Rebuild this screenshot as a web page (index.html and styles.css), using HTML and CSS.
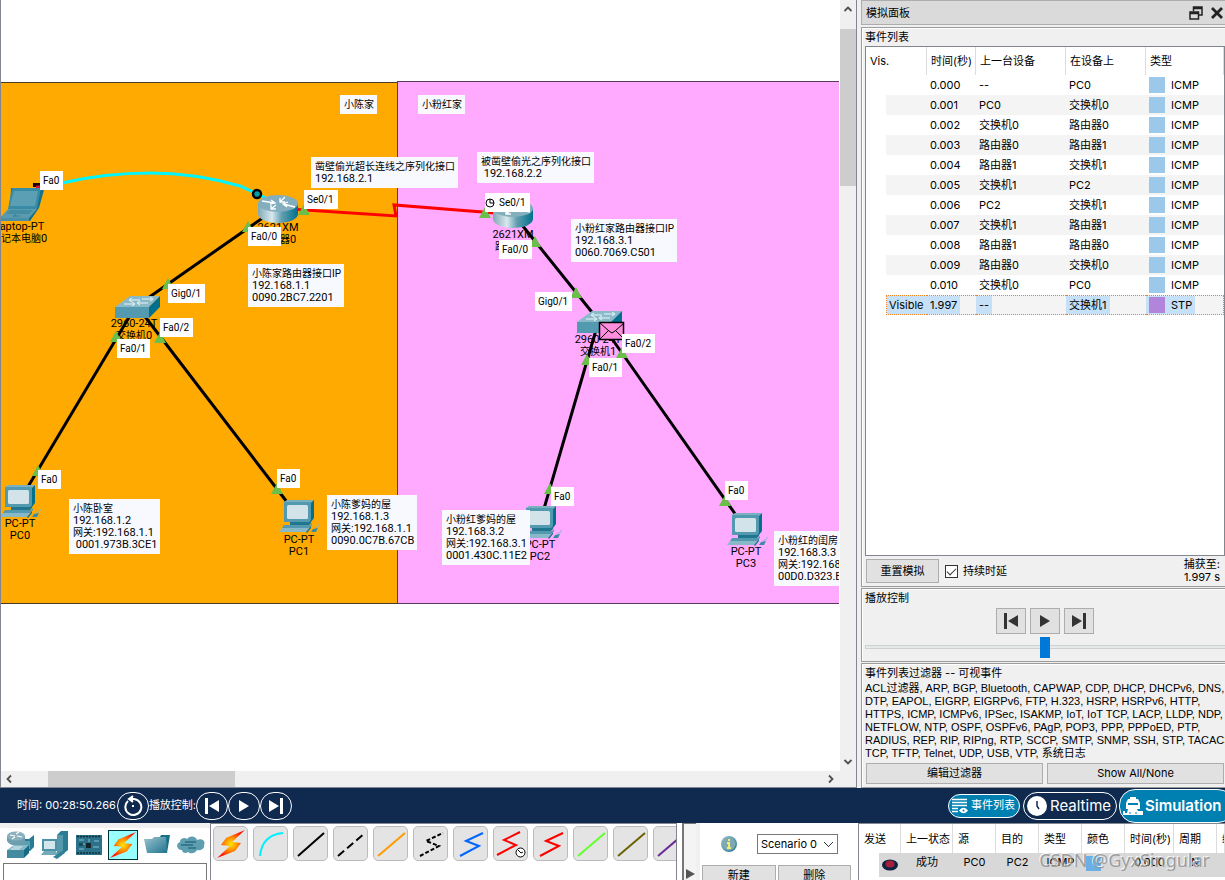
FILE: index.html
```html
<!DOCTYPE html>
<html lang="zh-CN">
<head>
<meta charset="utf-8">
<title>模拟面板</title>
<link rel="stylesheet" href="styles.css">
</head>
<body>
<svg class="defs" aria-hidden="true">
  <defs>
    <linearGradient id="g-router"><stop offset="0" stop-color="#7fa9b8"/><stop offset=".35" stop-color="#d9e8ed"/><stop offset=".6" stop-color="#5f9db0"/><stop offset="1" stop-color="#00708c"/></linearGradient>
    <linearGradient id="g-teal" x1="0" y1="0" x2="1" y2="1"><stop offset="0" stop-color="#9cc3cf"/><stop offset="1" stop-color="#20758f"/></linearGradient>
    <radialGradient id="g-bolt"><stop offset="0" stop-color="#ffe600"/><stop offset=".4" stop-color="#ff9a00"/><stop offset="1" stop-color="#ff1500"/></radialGradient>
    <symbol id="i-router" viewBox="0 0 41 28"><path d="M0 8v11c0 5 9 9 20 9s20-4 20-9V8z" fill="url(#g-router)"/><ellipse cx="20" cy="8.500" rx="20" ry="8.500" fill="#83aebd"/><g fill="none" stroke="#fff" stroke-width="1.300"><path d="M4 6l13 2M13 5l4 3-5 1M22 7l5-5M22 3v4h5M18 10l-5 4M18 14h-5v-4M37 12l-12-3M30 7l-5 2 4 3"/></g></symbol>
    <symbol id="i-switch" viewBox="0 0 45 22"><path d="M0 11 15 0h30L34 11z" fill="#8ab9c8"/><path d="M0 11h34v11H0z" fill="#5399b0"/><path d="M34 11 45 0v11L34 22z" fill="#00708c"/><path d="M15 4h10M17 2l-3 2 3 2M9 8h10M17 6l3 2-3 2M27 3h10M35 1l3 2-3 2M23 7h10M25 5l-3 2 3 2" stroke="#e8f6fa" stroke-width="1" fill="none"/></symbol>
    <symbol id="i-pc" viewBox="0 0 41 33"><path d="M5 2 8 0h27l-3 3z" fill="#7bb0c0"/><path d="M32 3 35 0v18l-3 4z" fill="#00708c"/><path d="M5 2h27v20H5z" fill="#5399b0"/><rect x="8" y="5" width="21" height="14" rx="1.500" fill="#d2e3ea"/><path d="M11 22h19l2-2v3l-2 2H11z" fill="#20758f"/><path d="M5 25h26l2-2v2l-3 3H3z" fill="#5399b0"/><path d="M3 28h27l-3 4H0z" fill="#88b9c9"/><path d="M27 32l5-6v2l-4 5z" fill="#17718b"/><path d="M32 32l2-3 5-1-2 4z" fill="#388ba4"/><path d="M36 28c1-2 5 0 4-4" fill="none" stroke="#88b9c9"/></symbol>
    <symbol id="i-laptop" viewBox="0 0 44 34"><path d="M11 1h33v2l-5 18-9 13H0v-3l10-9z" fill="#17718b"/><path d="M12 1h29l-4 21H8z" fill="#388ba4"/><path d="M14 4h24l-3 15H10z" fill="#5b9fb4"/><path d="M8 22h29l-8 9H0z" fill="#5b9bb0"/><path d="M0 31h29v3H0z" fill="#488fa7"/><path d="M9 24h23M7 26h23M13 29h7M16 27l-3 3" stroke="#2f8099"/></symbol>
    <symbol id="i-bolt" viewBox="0 0 30 30"><path d="M29 1 10 9 5 16l9 1L1 29l18-7 6-8-9-1z" fill="url(#g-bolt)"/></symbol>
    <symbol id="i-prev" viewBox="0 0 16 16"><path d="M1 0h3v16H1zM15 2v12L5 8z" fill="currentColor"/></symbol>
    <symbol id="i-play" viewBox="0 0 16 16"><path d="M3 2v12l10-6z" fill="currentColor"/></symbol>
    <symbol id="i-next" viewBox="0 0 16 16"><path d="M12 0h3v16h-3zM1 2v12l10-6z" fill="currentColor"/></symbol>
    <symbol id="i-tri" viewBox="0 0 12 12"><path d="M6 0 12 11H0z" fill="#6abf4a"/></symbol>
  </defs>
</svg>
<div class="app">
  <main class="workspace">
    <div class="canvas">
      <div class="zone zone-a"></div>
      <div class="zone zone-b"></div>
      <div class="name n-laptop">Laptop-PT<br><i>笔记本电脑</i>0</div>
      <div class="name n-r0">2621XM<br><i>路由器</i>0</div>
      <div class="name n-s0">2960-24T<br><i>交换机</i>0</div>
      <div class="name n-pc0">PC-PT<br>PC0</div>
      <div class="name n-pc1">PC-PT<br>PC1</div>
      <div class="name n-r1">2621XM<br><i>路由器</i>1</div>
      <div class="name n-s1">2960-24T<br><i>交换机</i>1</div>
      <div class="name n-pc2">PC-PT<br>PC2</div>
      <div class="name n-pc3">PC-PT<br>PC3</div>
      <svg class="links" aria-hidden="true">
        <path d="M33 185h10" stroke="#100" stroke-width="4"/><path d="M36 187h4" stroke="#e01030" stroke-width="3"/>
        <path d="M62 183Q105 173 150 173T240 186L266 198" fill="none" stroke="#00f6ff" stroke-width="3"/>
        <path d="M290 209 396 216 394 205 495 213" fill="none" stroke="#f00" stroke-width="3"/>
        <g stroke="#000" stroke-width="3"><path d="M264 217 148 298M131 314 26 490M143 314 290 506M522 225 595 316M596 330 543 512M610 336 738 518"/></g>
        <use href="#i-laptop" x="0" y="187" width="44" height="34"/>
        <use href="#i-router" x="258" y="195" width="41" height="28"/>
        <use href="#i-router" x="493" y="200" width="41" height="28"/>
        <use href="#i-switch" x="115" y="296" width="45" height="22"/>
        <use href="#i-switch" x="577" y="311" width="45" height="22"/>
        <use href="#i-pc" x="0" y="485" width="41" height="33"/>
        <use href="#i-pc" x="279" y="500" width="41" height="33"/>
        <use href="#i-pc" x="521" y="506" width="41" height="33"/>
        <use href="#i-pc" x="727" y="513" width="41" height="33"/>
        <circle cx="257" cy="194" r="4" fill="#009fa5" stroke="#000" stroke-width="2.500"/>
        <use href="#i-tri" x="298" y="204" width="12" height="12"/><use href="#i-tri" x="242" y="221" width="12" height="12"/>
        <use href="#i-tri" x="162" y="278" width="12" height="12"/><use href="#i-tri" x="110" y="331" width="12" height="12"/>
        <use href="#i-tri" x="154" y="332" width="12" height="12"/><use href="#i-tri" x="32" y="465" width="12" height="12"/>
        <use href="#i-tri" x="271" y="483" width="12" height="12"/><use href="#i-tri" x="479" y="207" width="12" height="12"/>
        <use href="#i-tri" x="529" y="236" width="12" height="12"/><use href="#i-tri" x="570" y="287" width="12" height="12"/>
        <use href="#i-tri" x="616" y="347" width="12" height="12"/><use href="#i-tri" x="581" y="354" width="12" height="12"/>
        <use href="#i-tri" x="544" y="483" width="12" height="12"/><use href="#i-tri" x="719" y="495" width="12" height="12"/>
        <g stroke="#000" fill="#ff8fdc"><rect x="599.500" y="322.500" width="24" height="17" stroke-width="1.500"/><path d="M600 323l9 8 3 2 3-2 9-8M600 339l8-8M624 339l-8-8" fill="none"/></g>
      </svg>
      <div class="note a1"><i>小陈家</i></div>
      <div class="note a2"><i>凿壁偷光超长连线之序列化接口</i><br>192.168.2.1</div>
      <div class="note a3"><i>小陈家路由器接口IP</i><br>192.168.1.1<br>0090.2BC7.2201</div>
      <div class="note a4"><i>小陈卧室</i><br>192.168.1.2<br><i>网关</i>:192.168.1.1<br>&nbsp;0001.973B.3CE1</div>
      <div class="note a5"><i>小陈爹妈的屋</i><br>192.168.1.3<br><i>网关</i>:192.168.1.1<br>0090.0C7B.67CB</div>
      <div class="note b1"><i>小粉红家</i></div>
      <div class="note b2"><i>被凿壁偷光之序列化接口</i><br>&nbsp;192.168.2.2</div>
      <div class="note b3"><i>小粉红家路由器接口IP</i><br>192.168.3.1<br>0060.7069.C501</div>
      <div class="note b4"><i>小粉红爹妈的屋</i><br>192.168.3.2<br><i>网关</i>:192.168.3.1<br>0001.430C.11E2</div>
      <div class="note b5"><i>小粉红的闺房</i><br>192.168.3.3<br><i>网关</i>:192.168.3.1<br>00D0.D323.E</div>
      <div class="port p1">Fa0</div><div class="port p2">Se0/1</div><div class="port p3">Fa0/0</div>
      <div class="port p4">Gig0/1</div><div class="port p5">Fa0/2</div><div class="port p6">Fa0/1</div>
      <div class="port p7">Fa0</div><div class="port p8">Fa0</div>
      <div class="port p9"><svg width="10" height="10" viewBox="0 0 10 10" fill="none" stroke="#000"><circle cx="5" cy="5" r="4"/><path d="M5 1v4h4"/></svg>Se0/1</div>
      <div class="port p10">Fa0/0</div><div class="port p11">Gig0/1</div><div class="port p12">Fa0/2</div>
      <div class="port p13">Fa0/1</div><div class="port p14">Fa0</div><div class="port p15">Fa0</div>
    </div>
    <div class="vbar"><svg width="10" height="10" viewBox="0 0 10 10"><path d="M1.500 7 5 3.500 8.500 7"/></svg><div class="vtrack"><div class="vthumb"></div></div><svg width="10" height="10" viewBox="0 0 10 10"><path d="M1.500 3 5 6.500 8.500 3"/></svg></div>
    <div class="hbar"><svg width="10" height="10" viewBox="0 0 10 10"><path d="M7 1.500 3.500 5 7 8.500"/></svg><div class="htrack"><div class="hthumb"></div></div><svg width="10" height="10" viewBox="0 0 10 10"><path d="M3 1.500 6.500 5 3 8.500"/></svg></div>
  </main>

  <aside class="side">
    <header class="title"><span>模拟面板</span>
      <button aria-label="浮动"><svg width="14" height="14" viewBox="0 0 14 14" fill="none" stroke="#222" stroke-width="1.500"><path d="M4.500 5V1h8.500v8H10M4 2.500h9"/><path d="M1 6h8.500v7H1zM1 7.500h8"/></svg></button>
      <button aria-label="关闭"><svg width="14" height="14" viewBox="0 0 14 14"><path d="M2 2l10 10M12 2 2 12" stroke="#222" stroke-width="2.800"/></svg></button>
    </header>
    <section class="box events">
      <h2>事件列表</h2>
      <div class="list">
        <table class="ev">
          <colgroup><col class="c-in"><col class="c-vis"><col class="c-time"><col class="c-last"><col class="c-at"><col></colgroup>
          <thead><tr><th colspan="2">Vis.</th><th>时间(秒)</th><th>上一台设备</th><th>在设备上</th><th>类型</th></tr></thead>
          <tbody>
          <tr><td></td><td></td><td><span>0.000</span></td><td><span>--</span></td><td><span>PC0</span></td><td><span><b></b>ICMP</span></td></tr>
          <tr><td></td><td></td><td><span>0.001</span></td><td><span>PC0</span></td><td><span>交换机0</span></td><td><span><b></b>ICMP</span></td></tr>
          <tr><td></td><td></td><td><span>0.002</span></td><td><span>交换机0</span></td><td><span>路由器0</span></td><td><span><b></b>ICMP</span></td></tr>
          <tr><td></td><td></td><td><span>0.003</span></td><td><span>路由器0</span></td><td><span>路由器1</span></td><td><span><b></b>ICMP</span></td></tr>
          <tr><td></td><td></td><td><span>0.004</span></td><td><span>路由器1</span></td><td><span>交换机1</span></td><td><span><b></b>ICMP</span></td></tr>
          <tr><td></td><td></td><td><span>0.005</span></td><td><span>交换机1</span></td><td><span>PC2</span></td><td><span><b></b>ICMP</span></td></tr>
          <tr><td></td><td></td><td><span>0.006</span></td><td><span>PC2</span></td><td><span>交换机1</span></td><td><span><b></b>ICMP</span></td></tr>
          <tr><td></td><td></td><td><span>0.007</span></td><td><span>交换机1</span></td><td><span>路由器1</span></td><td><span><b></b>ICMP</span></td></tr>
          <tr><td></td><td></td><td><span>0.008</span></td><td><span>路由器1</span></td><td><span>路由器0</span></td><td><span><b></b>ICMP</span></td></tr>
          <tr><td></td><td></td><td><span>0.009</span></td><td><span>路由器0</span></td><td><span>交换机0</span></td><td><span><b></b>ICMP</span></td></tr>
          <tr><td></td><td></td><td><span>0.010</span></td><td><span>交换机0</span></td><td><span>PC0</span></td><td><span><b></b>ICMP</span></td></tr>
          <tr class="sel"><td></td><td><span>Visible</span></td><td><span>1.997</span></td><td><span>--</span></td><td><span>交换机1</span></td><td><span><b></b>STP</span></td></tr>
          </tbody>
        </table>
      </div>
      <div class="foot">
        <button class="btn reset">重置模拟</button>
        <label><input type="checkbox" checked>持续时延</label>
        <div class="captured">捕获至:<br>1.997 s</div>
      </div>
    </section>
    <section class="box playback">
      <h2>播放控制</h2>
      <div class="keys">
        <button class="btn" aria-label="后退"><svg width="16" height="16"><use href="#i-prev"/></svg></button>
        <button class="btn" aria-label="播放"><svg width="16" height="16"><use href="#i-play"/></svg></button>
        <button class="btn" aria-label="前进"><svg width="16" height="16"><use href="#i-next"/></svg></button>
      </div>
      <input class="speed" type="range" aria-label="播放速度">
    </section>
    <section class="box filters">
      <h2>事件列表过滤器 -- 可视事件</h2>
      <p>ACL过滤器, ARP, BGP, Bluetooth, CAPWAP, CDP, DHCP, DHCPv6, DNS,<br>DTP, EAPOL, EIGRP, EIGRPv6, FTP, H.323, HSRP, HSRPv6, HTTP,<br>HTTPS, ICMP, ICMPv6, IPSec, ISAKMP, IoT, IoT TCP, LACP, LLDP, NDP,<br>NETFLOW, NTP, OSPF, OSPFv6, PAgP, POP3, PPP, PPPoED, PTP,<br>RADIUS, REP, RIP, RIPng, RTP, SCCP, SMTP, SNMP, SSH, STP, TACACS,<br>TCP, TFTP, Telnet, UDP, USB, VTP, 系统日志</p>
      <div class="pair"><button class="btn">编辑过滤器</button><button class="btn">Show All/None</button></div>
    </section>
  </aside>

  <nav class="bar">
    <span>时间: 00:28:50.266</span>
    <button class="round first" aria-label="重置时间"><svg width="20" height="22" viewBox="0 0 20 22" fill="none" stroke="#fff" stroke-width="2"><path d="M5 6a8 8 0 1 0 6-2H6"/><path d="M10 1 6 4l4 3" fill="#fff"/><path d="M9 11h2"/></svg></button>
    <span>播放控制:</span>
    <button class="round" aria-label="后退"><svg width="16" height="16"><use href="#i-prev"/></svg></button>
    <button class="round" aria-label="播放"><svg width="16" height="16"><use href="#i-play"/></svg></button>
    <button class="round" aria-label="前进"><svg width="16" height="16"><use href="#i-next"/></svg></button>
    <div class="modes">
      <button class="pill ev-pill"><svg width="16" height="16" viewBox="0 0 16 16" fill="none" stroke="#fff" stroke-width="1.500"><path d="M0 1.500h15M0 4.500h15M0 7.500h15M0 10.500h6M0 13.500h6"/><path d="M8 12.500q3.500-4 7 0-3.500 4-7 0z" fill="#fff"/><circle cx="11.500" cy="12.500" r="1" fill="#007fb1" stroke="none"/></svg>事件列表</button>
      <button class="pill rt-pill"><svg width="20" height="20" viewBox="0 0 20 20"><circle cx="10" cy="10" r="10" fill="#fff"/><path d="M10 5v5l2 3" stroke="#0f294f" stroke-width="1.500" fill="none"/></svg>Realtime</button>
      <button class="pill sim-pill"><svg width="20" height="18" viewBox="0 0 20 18" fill="#fff"><path d="M7 0h6v2h2l2 4v6h-3l1 2h5v4H0v-4h2v2h2l1-4H3V6l2-4h2z"/><path d="M5 7h10" stroke="#007fb1" stroke-width="2"/><path d="M6 16h2M12 16h2" stroke="#007fb1"/></svg>Simulation</button>
    </div>
  </nav>

  <footer class="bottom">
    <div class="devices">
      <div class="kinds">
        <button aria-label="网络设备"><svg width="28" height="28" viewBox="0 0 28 28"><path d="M12 8h10l5-4v12l-4 4H12z" fill="#257c94"/><path d="M14 10h9v8h-9z" fill="#5d9eb1"/><path d="M0 5v5c3 6 15 6 18 0V5z" fill="#6d9fb0"/><ellipse cx="9" cy="5" rx="9" ry="4.500" fill="#8bb1be"/><path d="M3 4l5 1M15 6l-5-1M9 3l3-2M8 6l-3 2" stroke="#fff" stroke-width="1.200"/><path d="M0 19l7-5h15l-5 5z" fill="#8ab9c8"/><path d="M0 19h17v8H0z" fill="#438ba1"/><path d="M17 19l5-5v8l-5 5z" fill="#126c85"/><path d="M6 16h9M4 18h9" stroke="#dceef3"/></svg></button>
        <button aria-label="终端设备"><svg width="28" height="28" viewBox="0 0 28 28"><path d="M16 4l4-4h7v19l-5 4h-6z" fill="#2a7c93"/><path d="M16 4h6v19h-6z" fill="#5599ad"/><path d="M1 8h15v12H1z" fill="#4d93a8"/><path d="M3 10h11v8H3z" fill="#d2e6ec"/><path d="M3 20h12l2 4H0z" fill="#75aabb"/><path d="M12 26l9-6 3 2-8 6z" fill="#338198"/></svg></button>
        <button aria-label="组件"><svg width="26" height="20" viewBox="0 0 26 20"><path d="M0 0h26v20H0z" fill="#2b7189"/><path d="M1 1.500h23M1 18h23" stroke="#102f3b" stroke-width="1.500" stroke-dasharray="2 1"/><path d="M10 8h5v5h-5z" fill="#16252b"/><path d="M3 5h5M18 6h5M17 12h6M3 14h5M13 4v3M7 9h2" stroke="#8ac1d1"/><path d="M3 8h4v3H3z" fill="#174858"/></svg></button>
        <button class="on" aria-label="连接"><svg width="28" height="28"><use href="#i-bolt"/></svg></button>
        <button aria-label="杂项"><svg width="26" height="20" viewBox="0 0 26 20"><path d="M16 2l1-2h9l-3 18h-4z" fill="#186f87"/><path d="M0 4h8l2-2h12l1 16H3z" fill="url(#g-teal)"/></svg></button>
        <button aria-label="多用户"><svg width="28" height="18" viewBox="0 0 28 18"><path d="M5 14c-5 0-7-6-2-8 0-4 5-5 7-3 3-4 9-3 10 1 5-2 9 1 7 5 1 4-4 6-7 5-2 4-7 4-9 2-2 2-6 1-6-2z" fill="#5d9eb1"/><path d="M8 6h11M4 9h12M11 12h8" stroke="#2a6c83" stroke-width="1.500"/></svg></button>
      </div>
      <div class="well"></div>
    </div>
    <div class="cables">
      <button aria-label="自动"><svg width="30" height="30"><use href="#i-bolt"/></svg></button>
      <button aria-label="配置线"><svg width="30" height="30" viewBox="0 0 30 30"><path d="M4 27Q6 6 27 4" stroke="#00f0ff"/></svg></button>
      <button aria-label="直通线"><svg width="30" height="30" viewBox="0 0 30 30"><path d="M2 27 28 4" stroke="#000"/></svg></button>
      <button aria-label="交叉线"><svg width="30" height="30" viewBox="0 0 30 30"><path d="M2 27 29 4" stroke="#000" stroke-dasharray="8 4"/></svg></button>
      <button aria-label="光纤"><svg width="30" height="30" viewBox="0 0 30 30"><path d="M2 27 29 4" stroke="#ff9a00"/></svg></button>
      <button aria-label="电话线"><svg width="30" height="30" viewBox="0 0 30 30"><path d="M4 27 23 17 10 12 27 4" stroke="#000" stroke-dasharray="4 2"/></svg></button>
      <button aria-label="同轴"><svg width="30" height="30" viewBox="0 0 30 30"><path d="M4 27 23 17 10 12 27 4" stroke="#0066ff"/></svg></button>
      <button aria-label="串行DCE"><svg width="30" height="30" viewBox="0 0 30 30"><path d="M1 26 20 16 8 11 24 3" stroke="#f00"/><circle cx="24.500" cy="23.500" r="4.500" fill="#fff" stroke="#000"/><path class="thin" d="M22 21l3 3 2-1" stroke="#000"/></svg></button>
      <button aria-label="串行DTE"><svg width="30" height="30" viewBox="0 0 30 30"><path d="M4 27 23 17 10 12 27 4" stroke="#f00"/></svg></button>
      <button aria-label="八爪线"><svg width="30" height="30" viewBox="0 0 30 30"><path d="M2 27 29 4" stroke="#62ff2c"/></svg></button>
      <button aria-label="自定义线"><svg width="30" height="30" viewBox="0 0 30 30"><path d="M2 27 29 4" stroke="#6b6300"/></svg></button>
      <button aria-label="USB"><svg width="30" height="30" viewBox="0 0 30 30"><path d="M2 27 29 4" stroke="#6b2b99"/></svg></button>
    </div>
    <div class="grip"><svg width="9" height="10" viewBox="0 0 9 10"><path d="M0 0 9 5 0 10z" fill="#555"/></svg></div>
    <div class="scenario">
      <div class="pick">
        <svg width="16" height="16" viewBox="0 0 16 16"><circle cx="8" cy="8" r="8" fill="url(#g-teal)"/><circle cx="8" cy="8" r="6.500" fill="#7fa8b4"/><path d="M8 3v2M6 7h2v5M6 12h4" stroke="#eef06a" stroke-width="2" fill="none"/></svg>
        <select aria-label="场景"><option>Scenario 0</option></select>
      </div>
      <div class="pair"><button class="btn">新建</button><button class="btn">删除</button></div>
    </div>
    <div class="pdus">
      <table class="pdu">
        <colgroup><col class="d20"><col class="d22"><col class="d52"><col class="d43"><col class="d43"><col class="d43"><col class="d43"><col class="d49"><col class="d43"><col></colgroup>
        <thead><tr><th colspan="2">发送</th><th>上一状态</th><th>源</th><th>目的</th><th>类型</th><th>颜色</th><th>时间(秒)</th><th>周期</th><th>编辑</th></tr></thead>
        <tbody><tr><td></td><td><svg width="16" height="12" viewBox="0 0 16 12"><ellipse cx="8" cy="6" rx="8" ry="5.500" fill="#0d2445"/><ellipse cx="8" cy="5" rx="4.500" ry="3.500" fill="#a51f3c"/></svg></td><td>成功</td><td>PC0</td><td>PC2</td><td>ICMP</td><td><b></b></td><td>0.000</td><td>N</td><td></td></tr></tbody>
      </table>
      <div class="mark">CSDN @GyxSingular</div>
    </div>
  </footer>
</div>
</body>
</html>
```
FILE: styles.css
```css
* { box-sizing: border-box; }
body { margin: 0; font: 11px/13px Inter, "Noto Sans CJK SC", sans-serif; color: #000; background: #f0f0f0; overflow: hidden; }
button, input, select { font: inherit; color: inherit; margin: 0; padding: 0; }
h2, p { margin: 0; font: inherit; }
i { font-style: normal; }
svg { display: block; flex: none; }
.defs { position: absolute; width: 0; height: 0; }

.app { display: grid; height: 100vh; grid-template: minmax(0, 1fr) 35px 57px / minmax(0, 1fr) 365px; }

/* topology canvas */
.workspace { display: grid; grid-template: minmax(0, 1fr) 17px / minmax(0, 1fr) 17px; border-left: 1px solid #82868e; border-right: 1px solid #82868e; margin-right: 3px; background: #fff; }
.canvas { position: relative; overflow: hidden; background: #fff; font: 11px/12px Roboto, "Noto Sans CJK SC", sans-serif; margin-left: -1px; border-left: 1px solid #82868e; }
.canvas i { font-size: 10px; }
.links { position: absolute; left: -1px; top: 0; width: 100%; height: 100%; }
.zone { position: absolute; border: 1px solid #4a3a2a; }
.zone-a { left: -1px; top: 82px; width: 398px; height: 522px; background: #fa0; }
.zone-b { left: 396px; top: 81px; right: -1px; height: 523px; background: #faf; border-color: #5a3a5a; }
.name, .note, .port { position: absolute; white-space: nowrap; }
.name { width: 80px; text-align: center; }
.note { background: #f8f9ff; padding: 4px 3px 3px 4px; }
.port { background: #fff; height: 19px; padding: 0 4px 0 3px; line-height: 19px; font-size: 10px; }
.n-laptop { left: -22px; top: 221px; } .n-r0 { left: 237px; top: 222px; } .n-s0 { left: 93px; top: 318px; }
.n-pc0 { left: -21px; top: 518px; } .n-pc1 { left: 258px; top: 534px; } .n-r1 { left: 472px; top: 229px; }
.n-s1 { left: 557px; top: 334px; } .n-pc2 { left: 499px; top: 539px; } .n-pc3 { left: 705px; top: 546px; }
.a1 { left: 339px; top: 95px; } .a2 { left: 310px; top: 157px; } .a3 { left: 247px; top: 264px; }
.a4 { left: 68px; top: 499px; } .a5 { left: 326px; top: 495px; }
.b1 { left: 417px; top: 95px; } .b2 { left: 476px; top: 152px; } .b3 { left: 570px; top: 219px; }
.b4 { left: 441px; top: 510px; } .b5 { left: 773px; top: 531px; }
.p1 { left: 39px; top: 171px; } .p2 { left: 303px; top: 190px; } .p3 { left: 247px; top: 227px; }
.p4 { left: 167px; top: 284px; } .p5 { left: 159px; top: 318px; } .p6 { left: 116px; top: 339px; }
.p7 { left: 37px; top: 470px; } .p8 { left: 276px; top: 469px; }
.p9 { left: 484px; top: 193px; display: flex; align-items: center; gap: 4px; padding-left: 0; }
.p10 { left: 498px; top: 240px; } .p11 { left: 534px; top: 292px; } .p12 { left: 621px; top: 334px; }
.p13 { left: 588px; top: 358px; } .p14 { left: 550px; top: 487px; } .p15 { left: 724px; top: 481px; }

.vbar, .hbar { display: flex; align-items: center; background: #f0f0f0; }
.vbar { flex-direction: column; padding: 4px 0; border-left: 1px solid #fff; }
.hbar { grid-column: 1 / 3; padding: 0 20px 0 3px; border-bottom: 1px solid #82868e; }
.vbar path, .hbar path { fill: none; stroke: #505050; stroke-width: 1.8; }
.vtrack { flex: 1; align-self: stretch; padding-top: 15px; }
.vthumb { height: 157px; background: #cdcdcd; }
.htrack { flex: 1; align-self: stretch; padding-left: 34px; }
.hthumb { width: 24%; height: 16px; background: #cdcdcd; }

/* simulation panel */
.side { display: flex; flex-direction: column; gap: 1px; min-width: 0; overflow: hidden; padding-left: 1px; }
.title { display: flex; align-items: center; gap: 7px; height: 25px; padding: 1px 1px 0 4px; margin-bottom: 1px; border: 1px solid #adadad; border-right: 0; background: #dadada; }
.title span { flex: 1; }
.title button { border: 0; background: none; }
.box { border: 1px solid #9b9b9b; border-right: 0; box-shadow: inset 1px 1px #fff; padding: 2px 0 0 3px; }
.events { flex: 1; display: flex; flex-direction: column; min-height: 0; }
.list { flex: 1; margin-top: 2px; border: 1px solid #82868e; background: #fff; }
h2 { line-height: 14px; height: 14px; }
table { width: 100%; border-collapse: separate; border-spacing: 0; table-layout: fixed; }
th, td { padding: 0; font-weight: normal; text-align: left; white-space: nowrap; overflow: hidden; }
.ev th { height: 28px; padding-left: 4px; border-right: 1px solid #dcdcdc; }
.ev td { height: 20px; }
.c-in { width: 20px; } .c-vis { width: 41px; } .c-time { width: 49px; } .c-last { width: 90px; } .c-at { width: 80px; }
.ev td span { display: flex; align-items: center; width: max-content; height: 18px; padding: 0 3px; }
.ev tbody tr:nth-child(even) td:not(:first-child) { background: #f4f4f4; }
.ev b { width: 16px; height: 16px; margin-right: 6px; background: #9cc8e9; }
.ev .sel td:not(:first-child) { border-top: 1px dotted #f08020; border-bottom: 1px dotted #f08020; }
.ev .sel td:nth-child(2) { border-left: 1px dotted #f08020; }
.ev .sel td:last-child { border-right: 1px dotted #f08020; }
.ev .sel span { background: #c5e0f7; }
.ev .sel td:nth-child(2) span { width: auto; padding: 0 2px; }
.ev .sel b { background: #b185dc; }
.foot { display: flex; align-items: center; height: 30px; padding-left: 1px; }
.btn { border: 1px solid #adadad; background: #e1e1e1; }
.reset { width: 73px; height: 24px; margin-right: 6px; }
label { display: flex; align-items: center; gap: 5px; flex: 1; }
input[type=checkbox] { appearance: none; width: 13px; height: 13px; border: 1px solid #333; background: #fff; display: grid; place-items: center; }
input[type=checkbox]::after { content: ""; width: 8px; height: 4px; border: solid #333; border-width: 0 0 1px 1px; transform: rotate(-45deg); margin-bottom: 2px; }
.captured { text-align: right; padding-right: 5px; }
.playback { height: 74px; }
.keys { display: flex; justify-content: center; gap: 4px; margin-top: 3px; }
.keys .btn { width: 30px; height: 26px; display: grid; place-items: center; color: #333; }
.speed { appearance: none; display: block; width: 100%; height: 21px; margin-top: 3px; background: linear-gradient(#e7eaea, #e7eaea) 1px 9px / 100% 2px no-repeat, linear-gradient(#d0d0d0, #d0d0d0) 0 8px / 100% 4px no-repeat; }
.speed::-webkit-slider-thumb { appearance: none; width: 10px; height: 21px; background: #0078d7; }
.filters { height: 125px; }
.filters p { white-space: nowrap; margin-top: 2px; font-family: "Liberation Sans", "Noto Sans CJK SC", sans-serif; }
.pair { display: grid; grid-template-columns: 1fr 1fr; gap: 4px; }
.filters .pair { padding: 3px 1px 0; }
.filters .pair .btn { height: 21px; }

/* time bar */
.bar { grid-column: 1 / 3; display: flex; align-items: center; background: #0f294f; color: #fff; padding-left: 17px; white-space: nowrap; }
.round { flex: none; width: 32px; height: 28px; display: grid; place-items: center; border: 1px solid #fff; border-radius: 14px; background: none; }
.first { margin-left: 1px; }
.modes { display: flex; align-items: center; gap: 3px; margin-left: auto; width: 277px; }
.pill { flex: none; display: flex; align-items: center; gap: 3px; border: 1px solid #fff; color: #fff; background: none; border-radius: 14px; }
.ev-pill { height: 24px; width: 72px; padding-left: 3px; background: #007fb1; }
.rt-pill { height: 28px; width: 94px; padding-left: 3px; font-size: 15px; }
.sim-pill { height: 34px; width: 115px; padding-left: 3px; gap: 2px; font-size: 15px; font-weight: 600; background: #007fb1; border-radius: 16px; margin-left: -1px; }

/* bottom strip */
.bottom { grid-column: 1 / 3; display: flex; min-width: 0; overflow: hidden; background: #fff; }
.devices { flex: none; width: 210px; display: flex; flex-direction: column; border-top: 5px solid #f0f0f0; }
.kinds { display: flex; align-items: center; gap: 4px; padding: 2px 6px; }
.kinds button { flex: none; width: 30px; height: 30px; display: grid; place-items: center; border: 0; background: none; }
.kinds .on { border: 1px solid #033; background: #98ffff; }
.well { flex: 1; margin: 1px 3px 0; border: 1px solid #777; border-bottom: 0; }
.cables { flex: 1; min-width: 0; display: flex; gap: 5px; overflow: hidden; padding: 2px; border: 1px solid #82868e; border-bottom: 0; }
.cables button { flex: none; width: 35px; height: 35px; display: grid; place-items: center; border: 1px solid #bbb; border-radius: 5px; background: #e4e4e4; }
.cables path { fill: none; stroke-width: 2; }
.cables .thin { stroke-width: 1; }
.grip { flex: none; width: 14px; margin-left: 5px; padding: 45px 2px 0; border-left: 2px solid #777; border-top: 1px solid #777; background: #f4f4f4; }
.scenario { flex: none; width: 162px; padding: 11px 7px 0 2px; border-left: 4px solid #f0f0f0; display: flex; flex-direction: column; gap: 11px; }
.pick { display: flex; align-items: center; gap: 20px; padding-left: 19px; }
select { appearance: none; width: 81px; height: 20px; border: 1px solid #777; border-radius: 0; padding-left: 3px; background: linear-gradient(-45deg, transparent 42%, #333 42% 58%, transparent 58%) 70px 7px / 5px 5px no-repeat, linear-gradient(45deg, transparent 42%, #333 42% 58%, transparent 58%) 66px 7px / 5px 5px no-repeat, #fff; }
.scenario .pair { gap: 2px; }
.scenario .btn { height: 20px; }
.pdus { position: relative; flex: none; width: 367px; border-left: 1px solid #82868e; border-top: 1px solid #82868e; }
.pdu th { height: 29px; padding: 2px 0 0 5px; border-right: 1px solid #dcdcdc; text-overflow: clip; }
.pdu td { height: 20px; text-align: center; background: #d8d8d8; padding-bottom: 6px; }
.pdu td:first-child { background: none; }
.pdu td svg { margin: 6px 0 0 3px; }
.pdu b { display: block; width: 15px; height: 15px; margin: 3px 0 0 4px; background: #6ab0e6; }
.d20 { width: 20px; } .d22 { width: 22px; } .d52 { width: 52px; } .d43 { width: 43px; } .d49 { width: 49px; }
.mark { position: absolute; right: 15px; top: 24px; font: 18px/24px "Noto Sans", sans-serif; color: #909090; text-shadow: -1px -1px #fff; opacity: .8; }
```
